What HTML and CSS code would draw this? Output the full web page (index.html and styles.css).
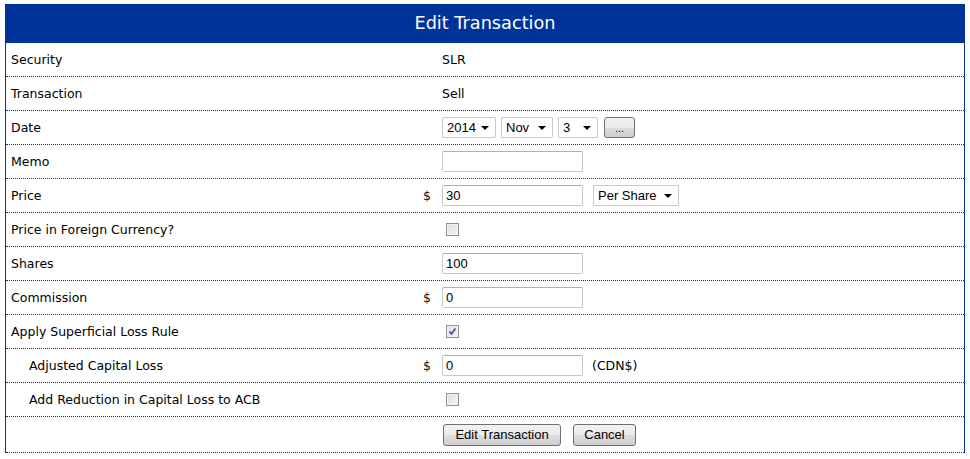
FILE: index.html
```html
<!DOCTYPE html>
<html>
<head>
<meta charset="utf-8">
<title>Edit Transaction</title>
<link rel="stylesheet" href="styles.css">
</head>
<body>
<div class="panel">
	<div class="panel-head">Edit Transaction</div>

	<div class="row">
		<div class="label">Security</div>
		<div class="sym"></div>
		<div class="value">SLR</div>
	</div>
	<div class="row">
		<div class="label">Transaction</div>
		<div class="sym"></div>
		<div class="value">Sell</div>
	</div>
	<div class="row">
		<div class="label">Date</div>
		<div class="sym"></div>
		<div class="value">
			<span class="dd dd-year"><select><option>2014</option></select></span>
			<span class="dd dd-month"><select><option>Nov</option></select></span>
			<span class="dd dd-day"><select><option>3</option></select></span>
			<button class="btn btn-pick" type="button">...</button>
		</div>
	</div>
	<div class="row">
		<div class="label">Memo</div>
		<div class="sym"></div>
		<div class="value"><input class="txt" type="text" value=""></div>
	</div>
	<div class="row">
		<div class="label">Price</div>
		<div class="sym">$</div>
		<div class="value">
			<input class="txt" type="text" value="30">
			<span class="dd dd-per"><select><option>Per Share</option></select></span>
		</div>
	</div>
	<div class="row">
		<div class="label">Price in Foreign Currency?</div>
		<div class="sym"></div>
		<div class="value"><span class="chk"></span></div>
	</div>
	<div class="row">
		<div class="label">Shares</div>
		<div class="sym"></div>
		<div class="value"><input class="txt" type="text" value="100"></div>
	</div>
	<div class="row">
		<div class="label">Commission</div>
		<div class="sym">$</div>
		<div class="value"><input class="txt" type="text" value="0"></div>
	</div>
	<div class="row">
		<div class="label">Apply Superficial Loss Rule</div>
		<div class="sym"></div>
		<div class="value">
			<span class="chk"><svg width="11" height="11" viewBox="0 0 11 11"><path d="M2.5 5.5 L4.5 8 L8.5 2.5" fill="none" stroke="#2f4f8f" stroke-width="1.6"/></svg></span>
		</div>
	</div>
	<div class="row">
		<div class="label sub">Adjusted Capital Loss</div>
		<div class="sym">$</div>
		<div class="value">
			<input class="txt" type="text" value="0">
			<span class="note">(CDN$)</span>
		</div>
	</div>
	<div class="row">
		<div class="label sub">Add Reduction in Capital Loss to ACB</div>
		<div class="sym"></div>
		<div class="value"><span class="chk"></span></div>
	</div>
	<div class="row row-actions">
		<div class="label"></div>
		<div class="sym"></div>
		<div class="value">
			<button class="btn btn-save" type="button">Edit Transaction</button>
			<button class="btn btn-cancel" type="button">Cancel</button>
		</div>
	</div>
</div>
</body>
</html>
```
FILE: styles.css
```css
* {box-sizing: border-box}
html, body {background: #fff;}
body {
	margin: 4px 5px;
	font-family: "DejaVu Sans", Verdana, sans-serif;
	font-size: 12.5px;
	color: #000;
}
.panel {
	width: 960px;
	border-left: 1px solid #003399;
	border-right: 1px solid #003399;
}
.panel-head {
	height: 39px;
	margin: 0 -1px;
	background-color: #003399;
	color: #fff;
	font-size: 17.7px;
	line-height: 39px;
	text-align: center;
}
.row {
	display: grid;
	grid-template-columns: 410px 26px 1fr;
	align-items: center;
	height: 34px;
	border-bottom: 1px dotted #003399;
}
.label {padding-left: 5px;}
.label.sub {padding-left: 23px;}
.sym {
	text-align: right;
	padding-right: 11px;
	font-weight: normal;
	color: #111;
}
.value {
	display: flex;
	align-items: center;
	padding-left: 0;
}
.txt {
	width: 141px;
	height: 21px;
	margin: 0;
	padding: 1px 3px;
	border: 1px solid #c4c8ce;
	border-top-color: #abadb3;
	border-radius: 2px;
	font-family: "Liberation Sans", Arial, sans-serif;
	font-size: 13px;
	color: #000;
}
.dd {
	position: relative;
	display: inline-block;
	margin-right: 5px;
}
.dd select {
	-webkit-appearance: none;
	appearance: none;
	height: 21px;
	margin: 0;
	padding: 0 0 0 4px;
	border: 1px solid #c6cad0;
	border-radius: 1px;
	background: #fff;
	font-family: "Liberation Sans", Arial, sans-serif;
	font-size: 13px;
	color: #000;
}
.dd::after {
	content: "";
	position: absolute;
	right: 7px;
	top: 9px;
	border-left: 4px solid transparent;
	border-right: 4px solid transparent;
	border-top: 4px solid #000;
	pointer-events: none;
}
.dd-year select {width: 54px;}
.dd-month select {width: 52px;}
.dd-day select {width: 40px;}
.dd-per {margin-left: 10px;}
.dd-per select {width: 86px;}
.btn {
	height: 22px;
	margin: 0;
	padding: 0 8px;
	border: 1px solid #707070;
	border-radius: 3px;
	background: linear-gradient(#f2f2f2 0%, #ebebeb 50%, #dddddd 51%, #cfcfcf 100%);
	font-family: "Liberation Sans", Arial, sans-serif;
	font-size: 13px;
	color: #000;
}
.btn-pick {
	width: 31px;
	height: 21px;
	margin-left: 1px;
	padding: 0;
	font-size: 11px;
	line-height: 14px;
}
.chk {
	display: inline-flex;
	align-items: center;
	justify-content: center;
	width: 13px;
	height: 13px;
	margin-left: 4px;
	border: 1px solid #8f8f8f;
	background: linear-gradient(135deg, #dcdcdc 0%, #f6f6f6 100%);
	box-shadow: inset 0 0 0 1px #f4f4f4;
}
.note {margin-left: 9px;}
.row-actions {height: 36px;}
.btn-save {width: 118px; margin-left: 1px;}
.btn-cancel {width: 63px; margin-left: 12px;}
```
